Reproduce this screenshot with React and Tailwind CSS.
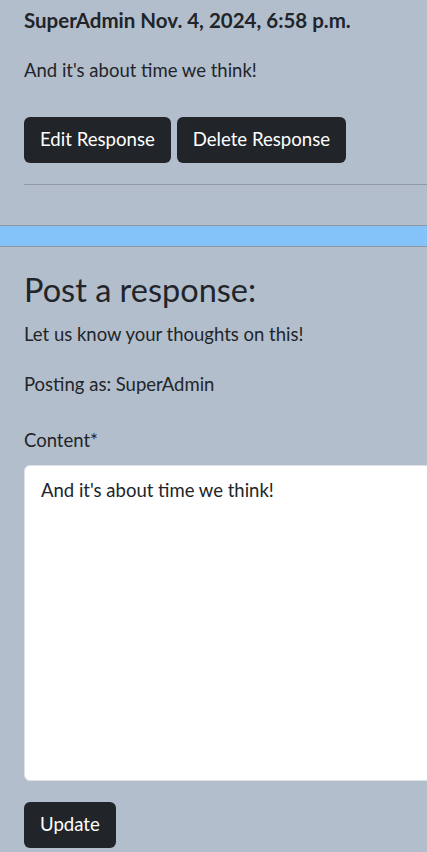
import React from "react";

export default function App() {
  return (
    <div className="w-[427px] h-[852px] overflow-hidden bg-[#b3becd] text-[#212529]" style={{ fontFamily: "Lato, 'Open Sans', sans-serif" }}>
      <div className="pl-6 w-[480px]">
        <div className="pt-2 text-[20.5px] leading-6 font-bold whitespace-nowrap">SuperAdmin Nov. 4, 2024, 6:58 p.m.</div>
        <p className="mt-[26px] text-[18.5px] leading-6">And it's about time we think!</p>
        <div className="mt-[35px] flex gap-[6px]">
          <button className="h-[46px] px-4 rounded-md bg-[#212529] text-white text-[18.6px]">Edit Response</button>
          <button className="h-[46px] px-4 rounded-md bg-[#212529] text-white text-[18.6px]">Delete Response</button>
        </div>
        <div className="mt-[21px] h-px bg-[#8f98a3]"></div>
      </div>
      <div className="mt-[40px] h-[22px] border-y border-[#8f98a3] bg-[#83c3fa]"></div>
      <div className="pl-6 w-[480px]">
        <h2 className="mt-6 text-[32.5px] leading-[38px]">Post a response:</h2>
        <p className="mt-[13px] text-[18.5px] leading-6">Let us know your thoughts on this!</p>
        <p className="mt-[26px] text-[18.5px] leading-6">Posting as: SuperAdmin</p>
        <label className="block mt-[32px] text-[18.5px] leading-6">Content*</label>
        <div className="mt-[13px] h-[316px] rounded-md bg-white border border-[#dee2e6] px-4 pt-3 text-[18.5px] leading-6">And it's about time we think!</div>
        <button className="mt-[21px] h-[46px] px-4 rounded-md bg-[#212529] text-white text-[18.6px]">Update</button>
      </div>
    </div>
  );
}
